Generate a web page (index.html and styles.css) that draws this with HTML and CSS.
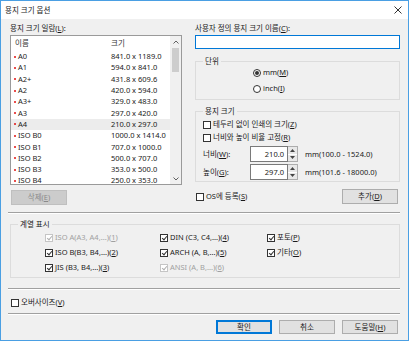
FILE: index.html
```html
<!DOCTYPE html>
<html lang="ko">
<head>
    <meta charset="UTF-8">
    <title>용지 크기 옵션</title>
    <link rel="stylesheet" href="styles.css">
</head>
<body>
<div class="window">
    <div class="titlebar">
        <span class="title">용지 크기 옵션</span>
        <svg class="close" width="8" height="8" viewBox="0 0 8 8"><path d="M0.5 0.5L7.5 7.5M7.5 0.5L0.5 7.5" stroke="#333" stroke-width="1"/></svg>
    </div>

    <div class="content">
        <div class="top">
            <!-- paper size list -->
            <div class="col-left">
                <div class="label">용지 크기 일람(<u>L</u>):</div>
                <div class="listbox">
                    <div class="list-main">
                        <div class="list-head">
                            <span class="c-name">이름</span><span class="c-size">크기</span>
                        </div>
                        <div class="list-rows">
                            <div class="row"><span class="c-name"><i class="dot"></i>A0</span><span class="c-size">841.0 x 1189.0</span></div>
                            <div class="row"><span class="c-name"><i class="dot"></i>A1</span><span class="c-size">594.0 x 841.0</span></div>
                            <div class="row"><span class="c-name"><i class="dot"></i>A2+</span><span class="c-size">431.8 x 609.6</span></div>
                            <div class="row"><span class="c-name"><i class="dot"></i>A2</span><span class="c-size">420.0 x 594.0</span></div>
                            <div class="row"><span class="c-name"><i class="dot"></i>A3+</span><span class="c-size">329.0 x 483.0</span></div>
                            <div class="row"><span class="c-name"><i class="dot"></i>A3</span><span class="c-size">297.0 x 420.0</span></div>
                            <div class="row selected"><span class="c-name"><i class="dot"></i>A4</span><span class="c-size">210.0 x 297.0</span></div>
                            <div class="row"><span class="c-name"><i class="dot"></i>ISO B0</span><span class="c-size">1000.0 x 1414.0</span></div>
                            <div class="row"><span class="c-name"><i class="dot"></i>ISO B1</span><span class="c-size">707.0 x 1000.0</span></div>
                            <div class="row"><span class="c-name"><i class="dot"></i>ISO B2</span><span class="c-size">500.0 x 707.0</span></div>
                            <div class="row"><span class="c-name"><i class="dot"></i>ISO B3</span><span class="c-size">353.0 x 500.0</span></div>
                            <div class="row"><span class="c-name"><i class="dot"></i>ISO B4</span><span class="c-size">250.0 x 353.0</span></div>
                        </div>
                    </div>
                    <div class="scrollbar">
                        <span class="arrow"><svg width="6" height="4" viewBox="0 0 6 4"><path d="M0.5 3.5L3 1L5.5 3.5" fill="none" stroke="#606060" stroke-width="1"/></svg></span>
                        <span class="track"><span class="thumb"></span></span>
                        <span class="arrow down"><svg width="6" height="4" viewBox="0 0 6 4"><path d="M0.5 0.5L3 3L5.5 0.5" fill="none" stroke="#606060" stroke-width="1"/></svg></span>
                    </div>
                </div>
                <button class="btn btn-delete" disabled>삭제(<u>E</u>)</button>
            </div>

            <!-- custom size -->
            <div class="col-right">
                <div class="label">사용자 정의 용지 크기 이름(<u>C</u>):</div>
                <div class="edit focused"></div>

                <div class="group group-unit">
                    <span class="group-title">단위</span>
                    <div class="check-row"><span class="radio on"></span>mm(<u>M</u>)</div>
                    <div class="check-row"><span class="radio"></span>inch(<u>I</u>)</div>
                </div>

                <div class="group group-size">
                    <span class="group-title">용지 크기</span>
                    <div class="check-row"><span class="box"></span>테두리 없이 인쇄의 크기(<u>Z</u>)</div>
                    <div class="check-row"><span class="box"></span>너비와 높이 비율 고정(<u>R</u>)</div>
                    <div class="num-row first">
                        <span class="num-label">너비(<u>W</u>):</span>
                        <span class="num-input">210.0</span>
                        <span class="spin">
                            <span class="spin-btn"><svg width="5" height="3" viewBox="0 0 5 3"><path d="M0 3L2.5 0L5 3Z" fill="#444"/></svg></span>
                            <span class="spin-btn"><svg width="5" height="3" viewBox="0 0 5 3"><path d="M0 0L2.5 3L5 0Z" fill="#444"/></svg></span>
                        </span>
                        <span class="num-range">mm(100.0 - 1524.0)</span>
                    </div>
                    <div class="num-row">
                        <span class="num-label">높이(<u>G</u>):</span>
                        <span class="num-input">297.0</span>
                        <span class="spin">
                            <span class="spin-btn"><svg width="5" height="3" viewBox="0 0 5 3"><path d="M0 3L2.5 0L5 3Z" fill="#444"/></svg></span>
                            <span class="spin-btn"><svg width="5" height="3" viewBox="0 0 5 3"><path d="M0 0L2.5 3L5 0Z" fill="#444"/></svg></span>
                        </span>
                        <span class="num-range">mm(101.6 - 18000.0)</span>
                    </div>
                </div>

                <div class="os-row">
                    <div class="check-row"><span class="box"></span>OS에 등록(<u>S</u>)</div>
                    <button class="btn">추가(<u>D</u>)</button>
                </div>
            </div>
        </div>

        <div class="separator sep-1"></div>

        <div class="group group-series">
            <span class="group-title">계열 표시</span>
            <div class="series-grid">
                <div class="check-row disabled"><span class="box checked"></span>ISO A(A3, A4,...)(<u>1</u>)</div>
                <div class="check-row"><span class="box checked"></span>DIN (C3, C4,...)(<u>4</u>)</div>
                <div class="check-row"><span class="box checked"></span>포토(<u>P</u>)</div>
                <div class="check-row"><span class="box checked"></span>ISO B(B3, B4,...)(<u>2</u>)</div>
                <div class="check-row"><span class="box checked"></span>ARCH (A, B,...)(<u>5</u>)</div>
                <div class="check-row"><span class="box checked"></span>기타(<u>O</u>)</div>
                <div class="check-row"><span class="box checked"></span>JIS (B3, B4,...)(<u>3</u>)</div>
                <div class="check-row disabled"><span class="box checked"></span>ANSI (A, B,...)(<u>6</u>)</div>
            </div>
        </div>

        <div class="separator sep-2"></div>

        <div class="check-row oversize"><span class="box"></span>오버사이즈(<u>V</u>)</div>

        <div class="separator sep-3"></div>

        <div class="buttons">
            <button class="btn default">확인</button>
            <button class="btn">취소</button>
            <button class="btn">도움말(<u>H</u>)</button>
        </div>
    </div>
</div>
</body>
</html>
```

FILE: styles.css
```css
* {
    box-sizing: border-box;
}
body {
    margin: 0;
    font-family: "Noto Sans", "Noto Sans CJK KR", sans-serif;
    font-size: 7.5px;
    line-height: 11px;
    color: #1a1a1a;
    background: #ffffff;
}
u {
    text-decoration: underline;
    text-underline-offset: 1px;
}
.window {
    width: 409px;
    height: 341px;
    border: 1px solid #4a9fe3;
    background: #f0f0f0;
}
.titlebar {
    height: 18px;
    background: #ffffff;
    display: flex;
    align-items: center;
    justify-content: space-between;
    padding: 0 6px 0 4px;
}
.title {
    font-size: 7.5px;
    color: #222;
}
.close {
    display: block;
}
.content {
    padding: 4px 8px 0 9px;
}
.top {
    display: grid;
    grid-template-columns: 172px 205px;
    column-gap: 13px;
}
.label {
    height: 10px;
    line-height: 10px;
}

/* list */
.listbox {
    margin-top: 2px;
    height: 150px;
    border: 1px solid #9a9a9a;
    background: #ffffff;
    display: flex;
    overflow: hidden;
}
.list-main {
    flex: 1;
    overflow: hidden;
}
.list-head {
    height: 15px;
    display: flex;
    align-items: center;
    color: #333;
}
.list-head .c-name {
    padding-left: 4px;
}
.c-name {
    width: 100px;
    display: flex;
    align-items: center;
}
.row {
    height: 11.3px;
    display: flex;
    align-items: center;
}
.row .c-name {
    padding-left: 3px;
}
.row.selected {
    background: #ececec;
}
.dot {
    width: 2px;
    height: 2px;
    border-radius: 50%;
    background: #e01010;
    margin-right: 2px;
}
.scrollbar {
    width: 11px;
    background: #f0f0f0;
    display: flex;
    flex-direction: column;
}
.arrow {
    height: 12px;
    display: flex;
    align-items: center;
    justify-content: center;
}
.arrow.down {
    height: 10px;
}
.track {
    flex: 1;
    padding: 0 2px;
}
.thumb {
    display: block;
    height: 24px;
    background: #cdcdcd;
}

/* buttons */
.btn {
    font-family: inherit;
    font-size: 7.5px;
    line-height: 11px;
    color: #1a1a1a;
    width: 56px;
    height: 15px;
    padding: 0;
    border: 1px solid #adadad;
    background: #e1e1e1;
}
.btn-delete {
    margin-top: 5px;
    margin-left: 1px;
    background: #cccccc;
    border-color: #bfbfbf;
    color: #8a8a8a;
}
.btn.default {
    border: 1px solid #0078d7;
    box-shadow: inset 0 0 0 1px #0078d7;
}

/* right column */
.edit {
    margin-top: 2px;
    height: 14px;
    background: #ffffff;
    border: 1px solid #7a7a7a;
}
.edit.focused {
    border-color: #0078d7;
}
.group {
    position: relative;
    border: 1px solid #dcdcdc;
}
.group-title {
    position: absolute;
    top: -6px;
    left: 7px;
    padding: 0 2px;
    background: #f0f0f0;
    line-height: 10px;
}
.group-unit {
    margin-top: 12px;
    height: 39px;
    padding: 5px 0 0 57px;
    display: flex;
    flex-direction: column;
    gap: 5px;
}
.group-size {
    margin-top: 11px;
    height: 71px;
    padding: 7px 0 0 7px;
    display: flex;
    flex-direction: column;
    gap: 2px;
}
.check-row {
    height: 11px;
    display: flex;
    align-items: center;
    white-space: nowrap;
}
.radio {
    width: 8px;
    height: 8px;
    border: 1px solid #333;
    border-radius: 50%;
    background: #fff;
    margin-right: 2px;
    display: flex;
    align-items: center;
    justify-content: center;
}
.radio.on::after {
    content: "";
    width: 4px;
    height: 4px;
    border-radius: 50%;
    background: #333;
}
.box {
    position: relative;
    width: 8px;
    height: 8px;
    border: 1px solid #333;
    background: #fff;
    margin-right: 2px;
    flex: none;
}
.box.checked::after {
    content: "";
    position: absolute;
    left: 1.5px;
    top: 0;
    width: 2px;
    height: 4px;
    border-right: 1px solid #333;
    border-bottom: 1px solid #333;
    transform: rotate(40deg);
}
.check-row.disabled {
    color: #a0a0a0;
}
.check-row.disabled .box {
    border-color: #c5c5c5;
}
.check-row.disabled .box.checked::after {
    border-color: #b0b0b0;
}
.num-row {
    height: 16px;
    display: flex;
    align-items: center;
}
.num-row.first {
    margin-top: 1px;
}
.num-label {
    width: 47px;
}
.num-input {
    width: 38px;
    height: 16px;
    background: #fff;
    border: 1px solid #7a7a7a;
    text-align: right;
    padding-right: 3px;
    line-height: 14px;
}
.spin {
    width: 10px;
    height: 16px;
    display: flex;
    flex-direction: column;
    border: 1px solid #adadad;
    border-left: none;
    background: #fff;
}
.spin-btn {
    flex: 1;
    display: flex;
    align-items: center;
    justify-content: center;
    background: #e8e8e8;
}
.spin-btn + .spin-btn {
    border-top: 1px solid #fff;
}
.num-range {
    margin-left: 7px;
}
.os-row {
    margin-top: 7px;
    display: flex;
    justify-content: space-between;
    align-items: center;
    padding: 0 2px 0 1px;
}

/* bottom part */
.separator {
    height: 1px;
    margin-left: -2px;
    background: #a0a0a0;
    box-shadow: 0 1px 0 #ffffff;
}
.sep-1 {
    margin-top: 7px;
}
.group-series {
    margin-top: 11px;
    height: 54px;
    padding: 7px 0 0 34px;
}
.series-grid {
    display: grid;
    grid-template-columns: 115px 107px auto;
    row-gap: 4px;
}
.sep-2 {
    margin-top: 10px;
}
.oversize {
    margin-top: 8px;
    margin-left: 1px;
}
.sep-3 {
    margin-top: 5px;
}
.buttons {
    margin-top: 6px;
    display: flex;
    justify-content: flex-end;
    gap: 7px;
    padding-right: 2px;
}
.buttons .btn {
    height: 14px;
    line-height: 11px;
}
```
